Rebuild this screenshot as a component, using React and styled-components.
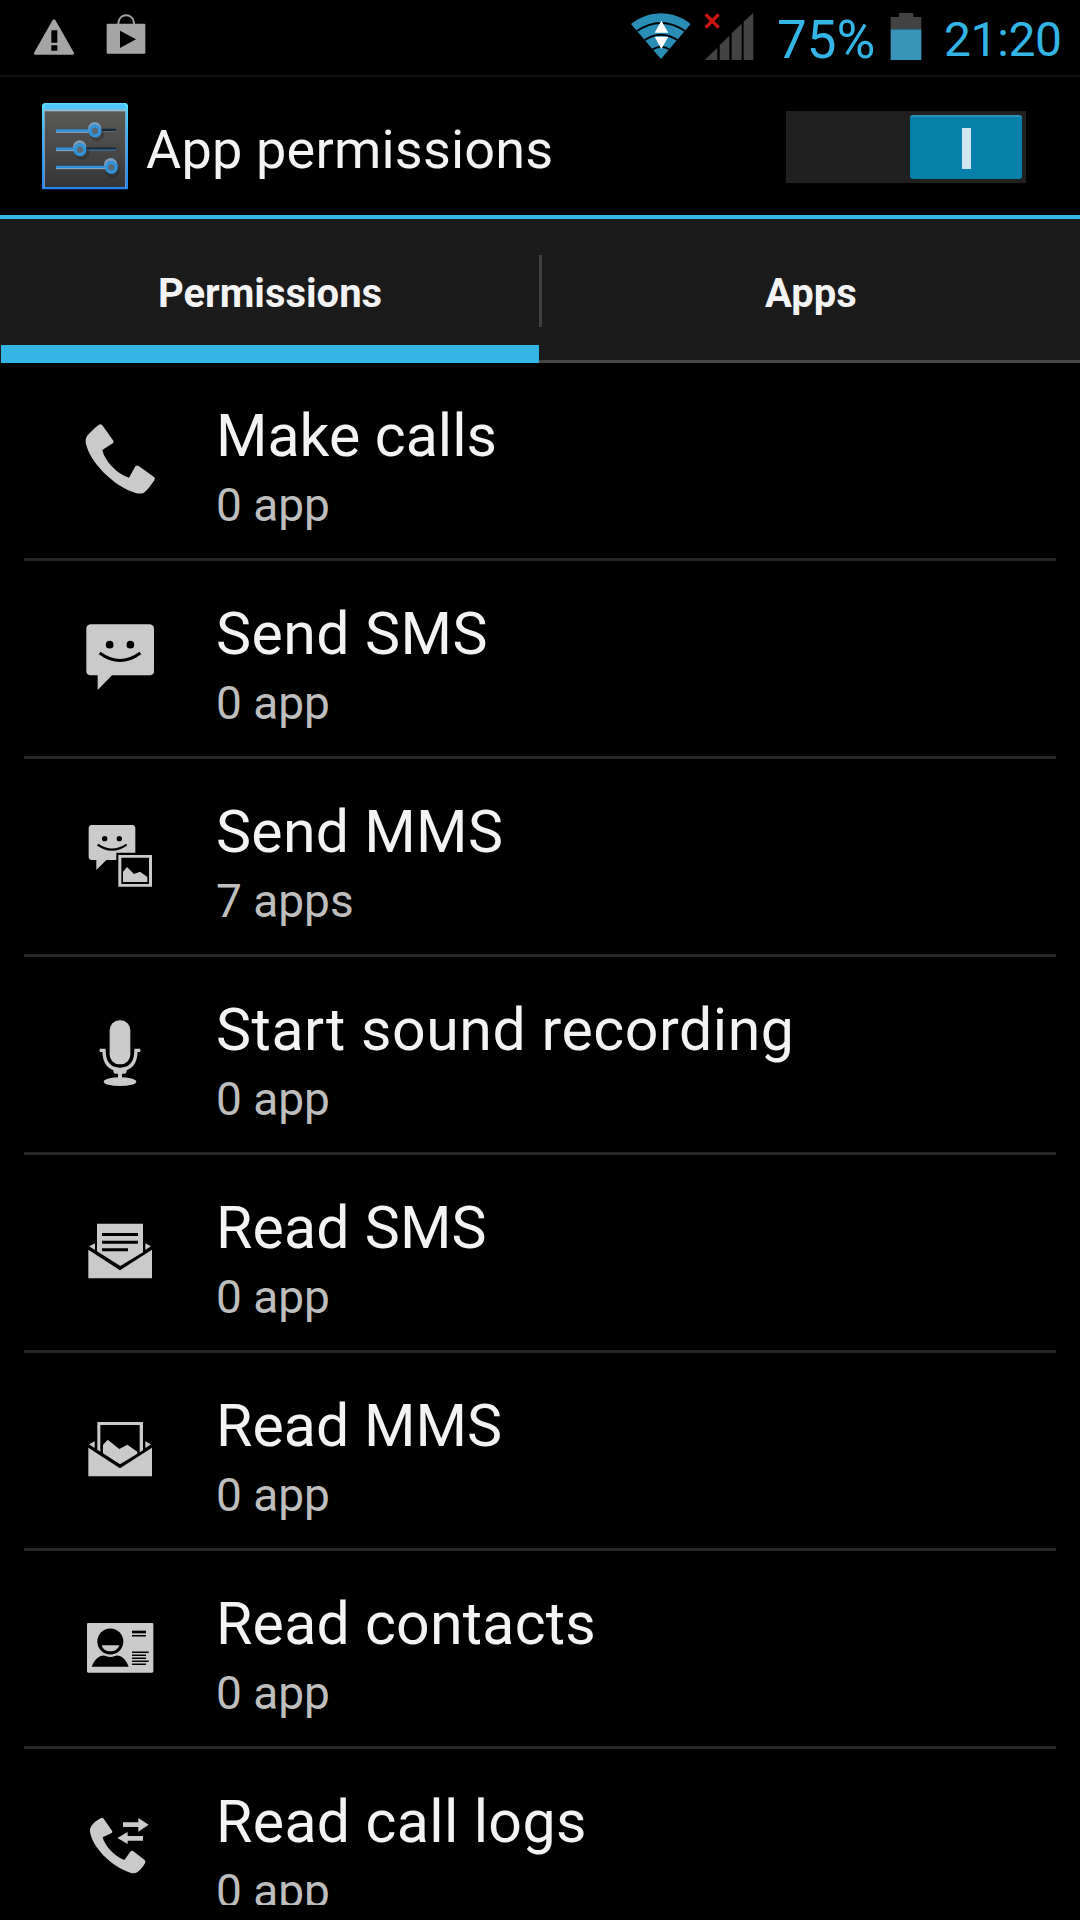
import React from 'react';
import styled, { createGlobalStyle } from 'styled-components';

const PhoneIcon = () => (
  <Icon viewBox="60 87 240 240">
    <path d="M117 104 Q122 100 127 106 L160 152 Q163 157 158 160 L127 180 C133 210 170 252 207 263 L226 229 Q230 224 236 228 L282 261 Q287 265 283 271 C270 290 260 303 252 308 Q241 313 227 309 C160 288 88 215 77 158 Q76 145 81 138 C90 127 104 113 117 104Z" />
  </Icon>
);

const SmsIcon = () => (
  <Icon viewBox="60 51 240 240">
    <path d="M90 73 H271 Q282 76 282 86 V214 Q282 224 271 226 H156 L113 270 V226 H90 Q79 224 79 214 V86 Q79 76 90 73Z" />
    <circle cx="149" cy="134" r="11.500" fill="#000" />
    <circle cx="211" cy="134" r="11.500" fill="#000" />
    <path d="M119 159 Q180 204 241 159" fill="none" stroke="#000" strokeWidth="9" />
  </Icon>
);

const MmsIcon = () => (
  <Icon viewBox="60 75 240 240">
    <path d="M93 105 H219 Q226 107 226 113 V188 H169 V210 H139 L109 240 V210 H93 Q86 208 86 202 V113 Q86 107 93 105Z" />
    <circle cx="134" cy="146" r="8" fill="#000" />
    <circle cx="178" cy="146" r="8" fill="#000" />
    <path d="M113 164 Q156 194 200 164" fill="none" stroke="#000" strokeWidth="6.500" />
    <path fillRule="evenodd" d="M175 195 H276 V290 H175Z M184 203 V282 H267 V203Z" />
    <path d="M189 276 V245 L201 231 L222 252 L240 245 L262 261 V276Z" />
  </Icon>
);

const MicIcon = () => (
  <Icon viewBox="60 69 240 240">
    <rect x="149" y="91" width="62" height="132" rx="29" />
    <path d="M119 181 H132 C132 215 145 238 180 238 C215 238 228 215 228 181 H241" fill="none" stroke="#cacaca" strokeWidth="10" />
    <path d="M160 238 H200 V246 Q198 251 192 251 H186 V266 H174 V251 H168 Q162 251 160 246Z" />
    <ellipse cx="180" cy="275" rx="49" ry="13" />
  </Icon>
);

const ReadSmsIcon = () => (
  <Icon viewBox="60 33 240 240">
    <path d="M111 71 H249 V157 L181 198 L111 154Z" />
    <path d="M126 103.500 H234 M126 127 H234 M126 149 H204" stroke="#000" strokeWidth="9" />
    <path d="M87 139 L105 130 V150Z M273 139 L256 130 V150Z" />
    <path d="M85 149 L180 211 L276 149 V235 H85Z" />
  </Icon>
);

const ReadMmsIcon = () => (
  <Icon viewBox="60 27 240 240">
    <path fillRule="evenodd" d="M112 66 H249 V151 L239 157 V75 H121 V155 L112 149Z" />
    <path d="M129 160 V135 L143 119 L178 147 L202 134 L232 155 V161 L180 193Z" />
    <path d="M87 133 L104 124 V144Z M273 133 L256 124 V144Z" />
    <path d="M85 143 L180 205 L276 143 V229 H85Z" />
  </Icon>
);

const ContactsIcon = () => (
  <Icon viewBox="60 21 240 240">
    <rect x="81" y="69" width="199" height="149" rx="4" />
    <g fill="#000">
      <circle cx="151" cy="124.500" r="39" />
      <path d="M95 200 Q103 177 122 168 Q132 165 137 168 Q151 174 165 168 Q170 165 180 168 Q198 177 206 200Z" />
    </g>
    <path d="M125 136 H178 Q172 154 151 154 Q130 154 125 136Z" />
    <path d="M216 96 H258" stroke="#000" strokeWidth="8" />
    <path d="M216 107 H258 M216 157 H266 M216 166 H258 M216 175 H258 M216 184 H266 M216 193 H258" stroke="#000" strokeWidth="4.500" />
  </Icon>
);

const CallLogIcon = () => (
  <Icon viewBox="60 195 240 240">
    <path d="M122 235 Q127 231 131 236 L156 272 Q159 276 155 279 L128 292 C133 315 163 350 193 360 L211 335 Q215 330 220 334 L254 360 Q258 364 255 370 C248 382 238 393 232 397 Q221 402 211 398 C150 377 98 321 90 275 Q89 265 94 258 C102 247 112 240 122 235Z" />
    <path d="M189 247 H235 V234 L266 254 L235 275 V261 H189Z" />
    <path d="M249 288 H203 V276 L172 294 L203 312 V302 H249Z" />
  </Icon>
);

const permissions = [
  { name: 'Make calls', apps: '0 app', icon: PhoneIcon, spacing: 0 },
  { name: 'Send SMS', apps: '0 app', icon: SmsIcon, spacing: 0.45 },
  { name: 'Send MMS', apps: '7 apps', icon: MmsIcon, spacing: 0.3 },
  { name: 'Start sound recording', apps: '0 app', icon: MicIcon, spacing: 0.55 },
  { name: 'Read SMS', apps: '0 app', icon: ReadSmsIcon, spacing: 0.2 },
  { name: 'Read MMS', apps: '0 app', icon: ReadMmsIcon, spacing: 0.05 },
  { name: 'Read contacts', apps: '0 app', icon: ContactsIcon, spacing: 0.25 },
  { name: 'Read call logs', apps: '0 app', icon: CallLogIcon, spacing: 0.37 },
];

const SettingsLogo = () => (
  <Logo viewBox="126 309 258 261">
    <defs>
      <linearGradient id="edge" x1="0" y1="0" x2="0" y2="1">
        <stop offset="0" stopColor="#5fdcff" />
        <stop offset="0.300" stopColor="#45b4f5" />
        <stop offset="1" stopColor="#2384f0" />
      </linearGradient>
      <linearGradient id="face" x1="0" y1="0" x2="0" y2="1">
        <stop offset="0" stopColor="#5a5a58" />
        <stop offset="0.500" stopColor="#484848" />
        <stop offset="1" stopColor="#343434" />
      </linearGradient>
    </defs>
    <path d="M132 309 H378 L384 315 V568 H126 V315Z" fill="url(#edge)" />
    <rect x="135" y="313" width="240" height="16" fill="#50c4fc" />
    <rect x="132" y="329" width="246" height="5" fill="#a9b4be" />
    <rect x="134" y="334" width="242" height="227" fill="url(#face)" />
    <path d="M133.500 330 V562 M376.500 330 V562" stroke="#8fa6b8" strokeWidth="2" />
    <path d="M304 390 H348 M258 446 H348" stroke="#17283a" strokeWidth="7" />
    <path d="M262 450 H348" stroke="#3a7fb8" strokeWidth="3" />
    <path d="M304 395 H348" stroke="#6a7077" strokeWidth="3" />
    <path d="M168 392 H268 M168 447 H222 M168 502 H316" stroke="#2f8fd6" strokeWidth="9" />
    <path d="M168 397 H268 M168 452 H222 M168 506 H316" stroke="#9db8d0" strokeWidth="2.500" />
    <g fill="none" stroke="#222" strokeOpacity="0.350" strokeWidth="9">
      <circle cx="291" cy="402" r="17" />
      <circle cx="246" cy="458" r="17" />
      <circle cx="338" cy="512" r="17" />
    </g>
    <g fill="none" stroke="#7d9dba" strokeWidth="9">
      <circle cx="284" cy="386" r="15.500" />
      <circle cx="239" cy="441" r="15.500" />
      <circle cx="332" cy="494" r="15.500" />
    </g>
    <g fill="#5d6870" stroke="#3195dc" strokeWidth="10">
      <circle cx="285" cy="393" r="14.500" />
      <circle cx="240" cy="449" r="14.500" />
      <circle cx="334" cy="502" r="14.500" />
    </g>
  </Logo>
);

const App = () => {
  return (
    <Screen>
      <GlobalStyle />
      <StatusBar>
        <Notifications>
          <svg width="40" height="45" viewBox="101 42 120 135">
            <path fill="#a5a5a5" d="M157 60 Q161 55 165 60 L220 157 Q223 164 215 164 H107 Q99 164 102 157Z" />
            <path fill="#000" d="M153 91 H171 V128 H153Z M153 136 H171 V152 H153Z" />
          </svg>
          <svg width="40" height="45" viewBox="317 42 120 135">
            <path d="M354 76 V69 C357 38 398 38 401 69 V76" fill="none" stroke="#a5a5a5" strokeWidth="6" />
            <rect x="319" y="71" width="116" height="90" rx="3" fill="#a5a5a5" />
            <path fill="#000" d="M359 92 L407 118 L359 144Z" />
          </svg>
        </Notifications>
        <SystemIcons>
          <svg width="60" height="49" viewBox="92 36 180 147">
            <defs>
              <clipPath id="fan">
                <path d="M92 72 C146 29 218 29 271 72 L182 177Z" />
              </clipPath>
            </defs>
            <g clipPath="url(#fan)">
              <rect x="90" y="36" width="184" height="145" fill="#2a8db6" />
              <g fill="none" stroke="#000" strokeWidth="6">
                <path d="M107 95 Q182 43 257 95" />
                <path d="M130 122 Q182 86 234 122" />
                <path d="M154 150 Q182 130 210 150" />
              </g>
            </g>
            <path fill="#fff" d="M183 62 L204 98 H163Z M183 147 L204 110 H163Z" />
          </svg>
          <Signal width="50" height="49" viewBox="312 36 150 147">
            <path d="M314 180 L352 143 V180Z M359 136 L388 107 V180 H359Z M395 100 L425 71 V180 H395Z M431 65 L460 38 V180 H431Z" fill="#434343" />
            <path d="M317 43 L356 83 M356 43 L317 83" stroke="#d01212" strokeWidth="10" />
          </Signal>
          <Percent>75%</Percent>
          <svg width="32" height="49" viewBox="870 36 96 147">
            <path d="M897 39 H940 V51 H964 V88 H872 V51 H897Z" fill="#424242" />
            <rect x="872" y="88" width="92" height="92" fill="#3a93b8" />
          </svg>
          <Clock>21:20</Clock>
        </SystemIcons>
      </StatusBar>
      <ActionBar>
        <SettingsLogo />
        <PageTitle>App permissions</PageTitle>
        <Switch>
          <Thumb>
            <OnMark />
          </Thumb>
        </Switch>
      </ActionBar>
      <Tabs>
        <Tab $active>Permissions</Tab>
        <TabDivider />
        <Tab>Apps</Tab>
      </Tabs>
      <List>
        {permissions.map(({ name, apps, icon: RowIcon, spacing }) => (
          <Row key={name}>
            <RowIcon />
            <RowText>
              <Name $spacing={spacing}>{name}</Name>
              <Count>{apps}</Count>
            </RowText>
          </Row>
        ))}
      </List>
    </Screen>
  );
};

const GlobalStyle = createGlobalStyle`
  * {
    box-sizing: border-box;
  }

  body {
    margin: 0;
    background-color: #000000;
    font-family: Roboto, sans-serif;
  }
`;

const Screen = styled.div`
  display: flex;
  flex-direction: column;
  width: 1080px;
  height: 1920px;
  padding-bottom: 15px; /* the list is cut just above the screen edge */
  overflow: hidden;
  background-color: #000000;
  color: #f3f3f3;
`;

const StatusBar = styled.div`
  display: flex;
  justify-content: space-between;
  flex-shrink: 0;
  height: 77px;
  padding: 12px 18px 0 34px;
  border-bottom: 2px solid #111111;
`;

const Notifications = styled.div`
  display: flex;
  gap: 32px;
  padding-top: 2px;
`;

const SystemIcons = styled.div`
  display: flex;
  color: #33b5e5;
  white-space: nowrap;
`;

const Signal = styled.svg`
  margin-left: 13px;
`;

const Percent = styled.span`
  width: 136px;
  padding-left: 23px;
  font-size: 53px;
  line-height: 56px;
`;

const Clock = styled.span`
  width: 140px;
  padding-left: 22px;
  font-size: 48px;
  letter-spacing: -0.4px;
  line-height: 55px;
`;

const ActionBar = styled.div`
  display: flex;
  align-items: center;
  flex-shrink: 0;
  height: 142px;
  padding: 0 54px 0 42px;
  border-bottom: 4px solid #33b5e5;
`;

const Logo = styled.svg`
  width: 86px;
  height: 87px;
`;

const PageTitle = styled.h1`
  flex: 1;
  margin: 6px 0 0 18px;
  font-size: 54px;
  font-weight: 400;
  letter-spacing: 0.2px;
`;

const Switch = styled.div`
  display: flex;
  justify-content: flex-end;
  width: 240px;
  height: 72px;
  margin-top: 2px;
  padding: 4px 4px;
  background-color: #202020;
`;

const Thumb = styled.div`
  display: flex;
  align-items: center;
  justify-content: center;
  width: 112px;
  height: 64px;
  border-radius: 3px;
  border-top: 2px solid #2b93b7;
  background-color: #0680aa;
`;

const OnMark = styled.span`
  width: 9px;
  height: 41px;
  background-color: #cfe6ee;
`;

const Tabs = styled.div`
  display: flex;
  flex-shrink: 0;
  height: 144px;
  padding-left: 1px;
  background-color: #1b1b1b;
`;

const Tab = styled.div`
  flex: 1;
  padding-top: 51px;
  border-bottom: ${({ $active }) => ($active ? '18px solid #33b5e5' : '3px solid #474747')};
  font-size: 40px;
  font-weight: 700;
  line-height: 48px;
  text-align: center;
`;

const TabDivider = styled.div`
  width: 3px;
  padding: 36px 0 33px;
  border-bottom: 3px solid #474747;
  background-color: #404040;
  background-clip: content-box;
`;

const List = styled.div`
  flex: 1;
  min-height: 0;
  padding: 0 24px;
  overflow: hidden;
`;

const Row = styled.div`
  display: flex;
  height: 198px;
  padding-left: 56px;
  border-bottom: 3px solid #262626;
`;

const Icon = styled.svg`
  width: 80px;
  height: 80px;
  margin-top: 56px;
  fill: #cacaca;
`;

const RowText = styled.div`
  padding: 36px 0 0 56px;
`;

const Name = styled.div`
  font-size: 59px;
  letter-spacing: ${({ $spacing }) => $spacing}px;
  line-height: 74px;
`;

const Count = styled.div`
  color: #bebebe;
  font-size: 46px;
  line-height: 65px;
`;

export default App;
